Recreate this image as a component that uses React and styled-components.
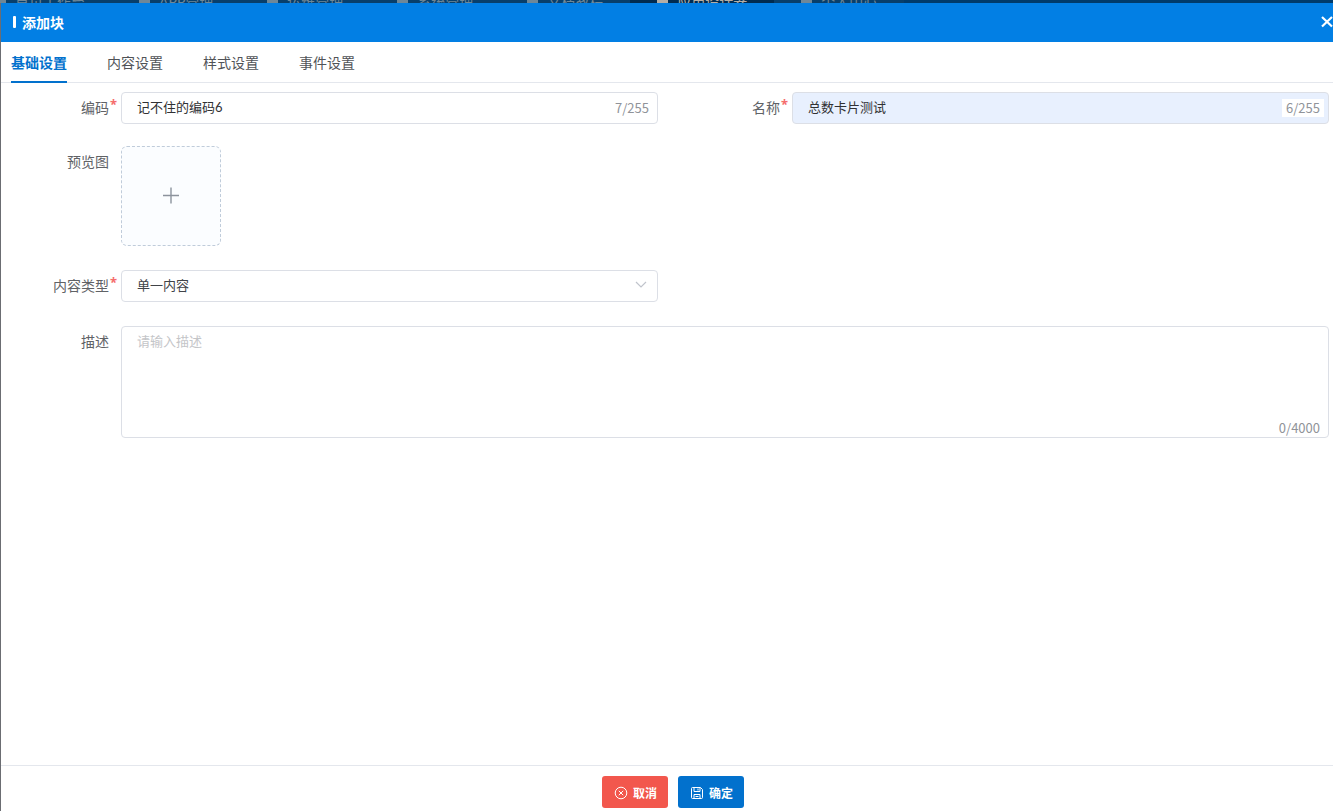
import React, { useState } from 'react'
import styled, { createGlobalStyle } from 'styled-components'

const GlobalStyle = createGlobalStyle`
  * {
    box-sizing: border-box;
  }

  body {
    margin: 0;
    font-family: Lato, "Noto Sans CJK SC", sans-serif;
    font-size: 14px;
    color: #606266;
    background-color: #6b6d72;
  }

  button, input, select, textarea {
    font-family: inherit;
  }
`;

const Page = styled.div`
  display: flex;
  flex-direction: column;
  height: 100vh;
  overflow: hidden;
`;

const NavStrip = styled.nav`
  display: flex;
  align-items: center;
  flex: none;
  height: 3px;
  overflow: hidden;
  background-color: #003b6b;
`;

const NavLink = styled.a`
  display: flex;
  align-items: center;
  gap: 9px;
  flex: none;
  height: 20px;
  padding: 0 27px;
  line-height: 20px;
  text-decoration: none;
  color: ${({ $active }) => ($active ? '#b5aea5' : '#6f8797')};
  background-color: ${({ $active }) => ($active ? '#002b50' : '#083f6b')};

  &:first-child {
    margin-left: -32px;
  }
`;

const NavMark = styled.span`
  width: 11px;
  height: 12px;
  background-color: currentColor;
`;

const Dialog = styled.section`
  display: flex;
  flex-direction: column;
  flex: 1;
  min-height: 0;
  margin-left: 1px;
  background-color: #fff;
`;

const DialogHeader = styled.header`
  display: flex;
  align-items: center;
  justify-content: space-between;
  height: 39px;
  padding: 0 0 2px 12px;
  background-color: #027fe4;
  color: #fff;
`;

const DialogTitle = styled.h1`
  display: flex;
  align-items: center;
  gap: 6px;
  margin: 0;
  font-size: 14px;
  font-weight: 700;

  &::before {
    content: '';
    width: 3px;
    height: 12px;
    border-radius: 1px;
    background-color: #fff;
  }
`;

const CloseButton = styled.button`
  display: flex;
  padding: 0;
  border: none;
  background: none;
  color: #fff;
  cursor: pointer;
`;

const Tabs = styled.div`
  display: flex;
  gap: 40px;
  height: 41px;
  padding-left: 10px;
  border-bottom: 1px solid #e4e7ed;
`;

const Tab = styled.button`
  height: 41px;
  padding: 0;
  border: none;
  border-bottom: 2px solid ${({ $active }) => ($active ? '#0271cd' : 'transparent')};
  background: none;
  font-size: 14px;
  font-weight: ${({ $active }) => ($active ? 700 : 400)};
  color: ${({ $active }) => ($active ? '#0271cd' : '#505357')};
  cursor: pointer;
`;

const Form = styled.form`
  display: grid;
  grid-template-columns: 1fr 1fr;
  grid-auto-rows: max-content;
  row-gap: 24px;
  column-gap: 14px;
  flex: 1;
  padding: 9px 4px 0 0;
`;

const Field = styled.div`
  display: flex;
  align-items: flex-start;
  grid-column: ${({ $wide }) => ($wide ? '1 / -1' : 'auto')};
`;

const UploadField = styled(Field)`
  margin-top: -2px;
`;

const Label = styled.label`
  display: flex;
  justify-content: flex-end;
  flex: none;
  width: 120px;
  padding-right: ${({ $required }) => ($required ? '4px' : '12px')};
  line-height: 32px;

  &::after {
    content: ${({ $required }) => ($required ? "'*'" : 'none')};
    width: 7px;
    padding-left: 1px;
    line-height: 24px;
    font-family: "Noto Sans", sans-serif;
    font-size: 13px;
    font-weight: 700;
    color: #f56c6c;
  }
`;

const Control = styled.div`
  display: flex;
  align-items: center;
  flex: 1;
  min-width: 0;
  height: 32px;
  padding-right: 4px;
  border: 1px solid #dcdfe6;
  border-radius: 4px;
  background-color: ${({ $filled }) => ($filled ? '#e8f0fe' : '#fff')};
`;

const TextInput = styled.input`
  flex: 1;
  min-width: 0;
  height: 28px;
  padding: 0 15px 3px;
  border: none;
  outline: none;
  background: none;
  font-size: 13px;
  color: #303133;
`;

const Count = styled.span`
  padding: 0 4px;
  line-height: 18px;
  font-family: "Noto Sans CJK SC", sans-serif;
  font-size: 13px;
  color: #909399;
  background-color: #fff;
`;

const Select = styled.select`
  flex: 1;
  height: 28px;
  padding: 0 15px 2px;
  border: none;
  outline: none;
  appearance: none;
  background: none;
  font-size: 13px;
  color: #404348;
`;

const SelectArrow = styled.svg`
  flex: none;
  margin: 0 6px 2px 0;
  pointer-events: none;
`;

const AreaBox = styled.div`
  display: flex;
  flex-direction: column;
  align-items: flex-end;
  flex: 1;
  height: 112px;
  padding: 0 4px 0 0;
  border: 1px solid #dcdfe6;
  border-radius: 4px;
`;

const TextArea = styled.textarea`
  flex: 1;
  width: 100%;
  padding: 4px 15px;
  border: none;
  outline: none;
  resize: none;
  background: none;
  font-size: 13px;
  line-height: 20px;
  color: #303133;

  &::placeholder {
    color: #c4c5c8;
  }
`;

const UploadButton = styled.button`
  display: flex;
  align-items: center;
  justify-content: center;
  width: 100px;
  height: 100px;
  border: 1px dashed #c0ccda;
  border-radius: 6px;
  background-color: #fbfdff;
  color: #8c939d;
  cursor: pointer;
`;

const Footer = styled.footer`
  display: flex;
  justify-content: center;
  gap: 10px;
  padding: 10px 0 3px 12px;
  border-top: 1px solid #e4e7ed;
`;

const ActionButton = styled.button`
  display: flex;
  align-items: center;
  justify-content: center;
  gap: 5px;
  width: 66px;
  height: 32px;
  padding: 1px 0 0 1px;
  border: none;
  border-radius: 3px;
  background-color: ${({ $danger }) => ($danger ? '#f2574d' : '#0271cd')};
  font-size: 12px;
  font-weight: 700;
  color: #fff;
  cursor: pointer;
`;

const navItems = ['首页工作台', 'APP管理', '运维管理', '系统管理', '文档教程', '应用设计器', '个人中心'];
const tabs = ['基础设置', '内容设置', '样式设置', '事件设置'];

const App = () => {
  const [tab, setTab] = useState(tabs[0]);
  const [code, setCode] = useState('记不住的编码6');
  const [name, setName] = useState('总数卡片测试');
  const [desc, setDesc] = useState('');

  return (
    <Page>
      <GlobalStyle />
      <NavStrip>
        {navItems.map((item) => (
          <NavLink key={item} href="#" $active={item === '应用设计器'}>
            <NavMark />
            {item}
          </NavLink>
        ))}
      </NavStrip>
      <Dialog>
        <DialogHeader>
          <DialogTitle>添加块</DialogTitle>
          <CloseButton type="button" aria-label="关闭">
            <svg width="13" height="13" viewBox="0 0 13 13" fill="none" stroke="currentColor" strokeWidth="2.2">
              <path d="M2 2l10 9.5M12 2l-10 9.5" />
            </svg>
          </CloseButton>
        </DialogHeader>
        <Tabs role="tablist">
          {tabs.map((item) => (
            <Tab key={item} type="button" role="tab" aria-selected={item === tab} $active={item === tab} onClick={() => setTab(item)}>
              {item}
            </Tab>
          ))}
        </Tabs>
        <Form>
          <Field>
            <Label htmlFor="code" $required>编码</Label>
            <Control>
              <TextInput id="code" type="text" maxLength={255} value={code} onChange={(e) => setCode(e.target.value)} />
              <Count>{code.length}/255</Count>
            </Control>
          </Field>
          <Field>
            <Label htmlFor="name" $required>名称</Label>
            <Control $filled>
              <TextInput id="name" type="text" maxLength={255} value={name} onChange={(e) => setName(e.target.value)} />
              <Count>{name.length}/255</Count>
            </Control>
          </Field>
          <UploadField $wide>
            <Label htmlFor="preview">预览图</Label>
            <UploadButton id="preview" type="button">
              <svg width="18" height="18" viewBox="0 0 18 18" fill="none" stroke="currentColor" strokeWidth="1.4">
                <path d="M9 .5v16M1 8.5h16" />
              </svg>
            </UploadButton>
          </UploadField>
          <Field>
            <Label htmlFor="type" $required>内容类型</Label>
            <Control>
              <Select id="type" defaultValue="single">
                <option value="single">单一内容</option>
              </Select>
              <SelectArrow width="12" height="8" viewBox="0 0 12 8" fill="none" stroke="#c0c4cc" strokeWidth="1.2">
                <path d="M1 1l5 5 5-5" />
              </SelectArrow>
            </Control>
          </Field>
          <Field $wide>
            <Label htmlFor="desc">描述</Label>
            <AreaBox>
              <TextArea id="desc" maxLength={4000} placeholder="请输入描述" value={desc} onChange={(e) => setDesc(e.target.value)} />
              <Count>{desc.length}/4000</Count>
            </AreaBox>
          </Field>
        </Form>
        <Footer>
          <ActionButton type="button" $danger>
            <svg width="14" height="14" viewBox="0 0 14 14" fill="none" stroke="currentColor">
              <circle cx="7" cy="7" r="5.8" />
              <path d="M4.8 4.8l4.4 4.4M9.2 4.8L4.8 9.2" />
            </svg>
            取消
          </ActionButton>
          <ActionButton type="button">
            <svg width="14" height="14" viewBox="0 0 14 14" fill="none" stroke="currentColor">
              <path d="M2.5 1.5h8l2 2v8a1 1 0 0 1-1 1h-9a1 1 0 0 1-1-1v-9a1 1 0 0 1 1-1z" />
              <path d="M4 1.5v4h6v-4M8 2.5v2M4 12.5v-4h6v4M5.5 10.5h3" />
            </svg>
            确定
          </ActionButton>
        </Footer>
      </Dialog>
    </Page>
  )
}

export default App
